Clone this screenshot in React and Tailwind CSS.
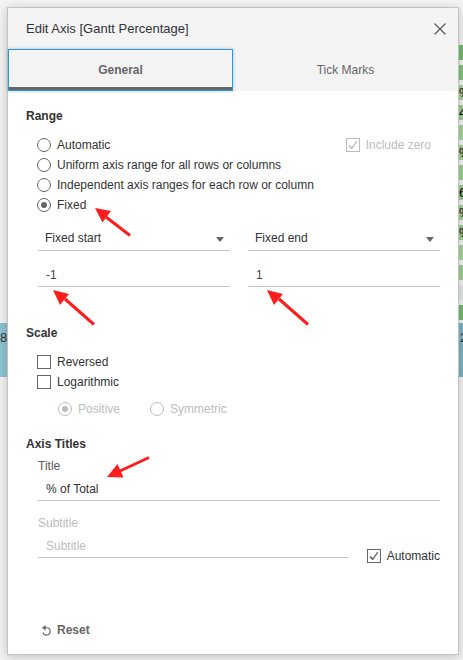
import { useState } from "react";

const RIGHT_BARS = [
  { color: "bg-[#75bd6f]", text: "" },
  { color: "bg-[#82c47b]", text: "" },
  { color: "bg-[#a6d69c]", text: "%" },
  { color: "bg-[#9ad090]", text: "4" },
  { color: "bg-[#a6d69c]", text: "" },
  { color: "bg-[#a1d296]", text: "%" },
  { color: "bg-[#9ad090]", text: "" },
  { color: "bg-[#9ad090]", text: "6" },
  { color: "bg-[#a1d296]", text: "%" },
  { color: "bg-[#9ad090]", text: "%" },
  { color: "bg-[#a6d69c]", text: "" },
  { color: "bg-[#9ad090]", text: "" },
  { color: "bg-[#e3e7e6]", text: "" },
  { color: "bg-[#75bd6f]", text: "" },
];

function Radio({ label, disabled, ...props }) {
  return (
    <label className={`flex h-5 items-center gap-1.5 ${disabled ? "text-[#bcbcbc]" : ""}`}>
      <input
        type="radio"
        disabled={disabled}
        className="grid size-3.5 shrink-0 appearance-none place-items-center rounded-full border border-[#666] bg-white before:size-1.5 before:rounded-full checked:before:bg-[#666] disabled:border-[#bcbcbc] disabled:checked:before:bg-[#bcbcbc]"
        {...props}
      />
      {label}
    </label>
  );
}

function Checkbox({ label, disabled, ...props }) {
  return (
    <label className={`flex h-5 items-center gap-1.5 ${disabled ? "text-[#bcbcbc]" : ""}`}>
      <span className="grid size-3.5 shrink-0">
        <input
          type="checkbox"
          disabled={disabled}
          className="peer col-start-1 row-start-1 size-3.5 appearance-none border border-[#666] bg-white disabled:border-[#bcbcbc]"
          {...props}
        />
        <svg
          viewBox="0 0 14 14"
          fill="none"
          stroke="currentColor"
          className="pointer-events-none invisible col-start-1 row-start-1 size-3.5 text-[#666] peer-checked:visible peer-disabled:text-[#bcbcbc]"
        >
          <path d="M3.2 7.6 L5.8 10.4" strokeWidth="1.8" />
          <path d="M5.4 10.8 L10.8 3.2" strokeWidth="1.3" />
        </svg>
      </span>
      {label}
    </label>
  );
}

function RangeEnd({ name, option, value }) {
  return (
    <div className="flex min-w-0 flex-1 flex-col gap-3">
      <div className="grid items-center">
        <select
          aria-label={name}
          className="col-start-1 row-start-1 h-[25px] w-full appearance-none rounded-none border-b border-[#c4c4c4] bg-transparent pl-[7px] text-[#333] outline-none"
        >
          <option>{option}</option>
        </select>
        <svg
          viewBox="0 0 8 5"
          className="pointer-events-none col-start-1 row-start-1 mr-1.5 mt-0.5 h-[5px] w-2 justify-self-end"
        >
          <path d="M0 0 H8 L4 5 Z" fill="#666" />
        </svg>
      </div>
      <input
        type="text"
        aria-label={`${name} value`}
        defaultValue={value}
        className="h-6 w-full border-b border-[#c4c4c4] pl-2 text-[#444] outline-none"
      />
    </div>
  );
}

export default function App() {
  const [range, setRange] = useState("fixed");
  return (
    <div className="flex overflow-hidden bg-[#f4f4f4] pb-[5px] font-['Liberation_Sans',Arial,sans-serif] text-xs text-[#333]">
      <div className="w-[7px] shrink-0 overflow-hidden pt-[323px]">
        <div className="h-[54px] bg-[#8cc4d3] pt-1.5 text-[13px] leading-[18px]">8</div>
      </div>

      <main className="relative z-10 mt-[7px] min-w-0 flex-1 border border-[#c2c2c2] bg-white shadow-[0_2px_10px_rgba(0,0,0,0.22)]">
        <header className="bg-[#f4f4f4]">
          <div className="flex h-[41px] items-center justify-between pl-[18px] pr-3">
            <h1 className="text-[13px]">Edit Axis [Gantt Percentage]</h1>
            <button type="button" aria-label="Close">
              <svg viewBox="0 0 12 12" className="size-3" fill="none" stroke="#555" strokeWidth="1.1">
                <path d="M0.5 0.5 L11.5 11.5 M11.5 0.5 L0.5 11.5" />
              </svg>
            </button>
          </div>
          <div role="tablist" className="flex h-[42px] text-[#666]">
            <button
              type="button"
              role="tab"
              aria-selected="true"
              className="flex w-1/2 flex-col border border-[#3593d6] font-bold shadow-[0_0_3px_rgba(53,147,214,0.5)]"
            >
              <span className="flex w-full flex-1 items-center justify-center border-b-3 border-[#666] pt-[3px]">General</span>
            </button>
            <button type="button" role="tab" aria-selected="false" className="w-1/2">
              Tick Marks
            </button>
          </div>
        </header>

        <div className="px-[18px] pb-3.5 pt-[15px] leading-5">
          <section>
            <h2 className="font-bold">Range</h2>
            <div className="mt-[9px] flex justify-between pl-[11px] pr-[9px]">
              <div>
                <Radio name="range" label="Automatic" checked={range === "auto"} onChange={() => setRange("auto")} />
                <Radio
                  name="range"
                  label="Uniform axis range for all rows or columns"
                  checked={range === "uniform"}
                  onChange={() => setRange("uniform")}
                />
                <Radio
                  name="range"
                  label="Independent axis ranges for each row or column"
                  checked={range === "independent"}
                  onChange={() => setRange("independent")}
                />
                <Radio name="range" label="Fixed" checked={range === "fixed"} onChange={() => setRange("fixed")} />
              </div>
              <Checkbox label="Include zero" disabled defaultChecked />
            </div>
            <div className="mt-[11px] flex gap-[18px] pl-3">
              <RangeEnd name="Range start" option="Fixed start" value="-1" />
              <RangeEnd name="Range end" option="Fixed end" value="1" />
            </div>
          </section>

          <section className="mt-9">
            <h2 className="font-bold">Scale</h2>
            <div className="mt-[9px] pl-[11px]">
              <Checkbox label="Reversed" />
              <Checkbox label="Logarithmic" />
              <div className="mt-[7px] flex gap-[30px] pl-[21px]">
                <Radio name="log" label="Positive" disabled defaultChecked />
                <Radio name="log" label="Symmetric" disabled />
              </div>
            </div>
          </section>

          <section className="mt-[15px]">
            <h2 className="font-bold">Axis Titles</h2>
            <div className="mt-0.5 pl-3">
              <label htmlFor="title" className="block text-[#5a5a5a]">
                Title
              </label>
              <input
                id="title"
                type="text"
                defaultValue="% of Total"
                className="mt-px block h-6 w-full border-b border-[#c4c4c4] pl-2 outline-none"
              />
              <label htmlFor="subtitle" className="mt-3 block text-[#bcbcbc]">
                Subtitle
              </label>
              <div className="mt-px flex h-8 gap-[19px]">
                <input
                  id="subtitle"
                  type="text"
                  placeholder="Subtitle"
                  className="h-6 min-w-0 flex-1 border-b border-[#c4c4c4] pl-2 outline-none placeholder:text-[#bcbcbc]"
                />
                <div className="self-end">
                  <Checkbox label="Automatic" defaultChecked />
                </div>
              </div>
            </div>
          </section>

          <button type="button" className="ml-4 mt-[54px] flex h-5 items-center gap-1.5 font-bold text-[#666]">
            <svg viewBox="0 0 9 11" className="h-[11px] w-[9px]" fill="none" stroke="#666">
              <path d="M1.5 2.7 H4.7 A3.7 3.7 0 1 1 1 7.5" strokeWidth="1.1" />
              <path d="M0 2.7 L3.6 0 V5.4 Z" fill="#666" stroke="none" />
            </svg>
            Reset
          </button>
        </div>

        <svg className="pointer-events-none absolute left-0 top-0 h-[500px] w-[320px]" viewBox="8 8 320 500" fill="#fc1d1c" stroke="#fc1d1c">
          <path d="M106 217 L130 235.500 M65 299 L94 324.500 M279 299 L308 324.500 M120 471 L149 457.500" strokeWidth="3" />
          <path
            d="M95 208 L111 211 L102.500 222.500 Z M53 290 L69 294 L60 305 Z M267 290 L283 294 L274 305 Z M107 477 L117.500 464 L123.500 477.500 Z"
            stroke="none"
          />
        </svg>
      </main>

      <aside className="w-1 shrink-0 overflow-hidden pt-[45px]">
        <div className="flex flex-col gap-[5px]">
          {RIGHT_BARS.map((bar, i) => (
            <div key={i} className={`h-[15px] overflow-hidden text-[13px] leading-[15px] text-black ${bar.color}`}>
              {bar.text}
            </div>
          ))}
        </div>
        <div className="mt-[3px] h-[54px] bg-[#78b5c9] pl-px pt-1.5 text-[13px] leading-[18px]">2</div>
      </aside>
    </div>
  );
}
